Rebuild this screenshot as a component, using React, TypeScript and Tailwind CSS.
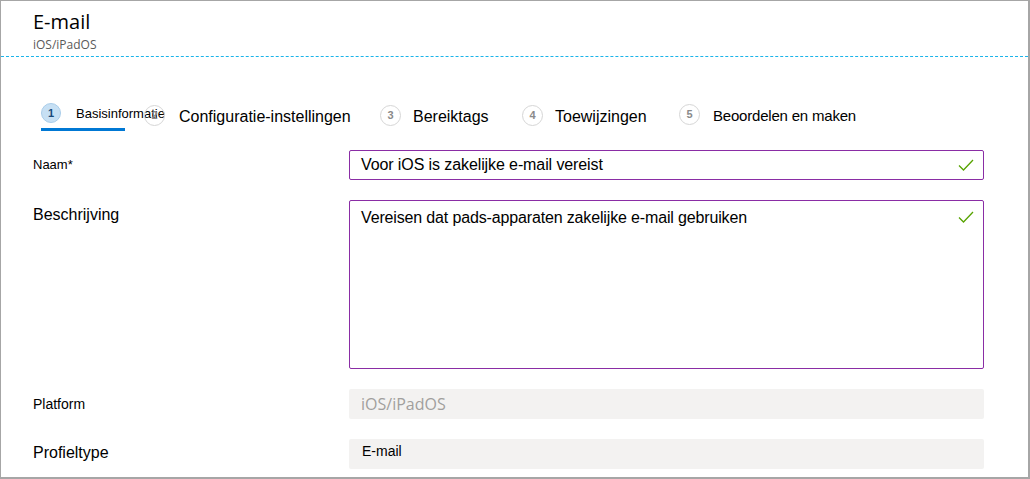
import React from "react";

const arial = { fontFamily: '"Liberation Sans", Arial, sans-serif' };
const segoe = { fontFamily: '"Open Sans", "Noto Sans", sans-serif' };

function Check() {
  return (
    <svg width="16" height="12" viewBox="0 0 16 12" className="shrink-0">
      <path d="M1 6.5 L5.5 11 L15 1" fill="none" stroke="#57a300" strokeWidth="1.3" />
    </svg>
  );
}

function StepCircle({ n, active }: { n: number; active?: boolean }) {
  return active ? (
    <div className="w-[20px] h-[20px] rounded-full bg-[#c7e0f4] border border-[#a9cdea] flex items-center justify-center text-[11px] font-bold text-[#1a4a7a] shrink-0">
      {n}
    </div>
  ) : (
    <div className="w-[21px] h-[21px] rounded-full bg-white border border-[#d6d6d6] flex items-center justify-center text-[11px] font-bold text-[#8a8a8a] shrink-0">
      {n}
    </div>
  );
}

export default function App() {
  return (
    <div
      className="w-[1030px] h-[479px] bg-white border-t border-l border-r-2 border-b-2 border-[#a6a6a6] overflow-hidden relative"
      style={arial}
    >
      {/* Header */}
      <div className="pl-[32px] pt-[9px] h-[55px]">
        <div className="text-[20px] leading-[24px] text-black" style={segoe}>E-mail</div>
        <div className="text-[12px] leading-[16px] text-[#5a5a5a] mt-[3px]" style={segoe}>iOS/iPadOS</div>
      </div>
      <div className="border-t border-dashed border-[#1bb4ea]" />

      {/* Steps */}
      <div className="relative h-[74px]">
        <div className="absolute left-[40px] top-[45px] flex items-center">
          <StepCircle n={1} active />
          <span className="ml-[15px] mt-[2px] text-[13px] text-black">Basisinformatie</span>
        </div>
        <div className="absolute left-[40px] top-[71px] w-[84px] h-[3px] bg-[#0078d4]" />
        <div className="absolute left-[143px] top-[44px] flex items-center">
          <div className="w-[21px] h-[21px] rounded-full border border-[#d6d6d6] flex items-center justify-center text-[11px] font-bold text-[#8a8a8a]">2</div>
          <span className="ml-[14px] mt-[4px] text-[16px] text-black">Configuratie-instellingen</span>
        </div>
        <div className="absolute left-[379px] top-[44px] flex items-center">
          <StepCircle n={3} />
          <span className="ml-[12px] mt-[4px] text-[16px] text-black">Bereiktags</span>
        </div>
        <div className="absolute left-[521px] top-[44px] flex items-center">
          <StepCircle n={4} />
          <span className="ml-[12px] mt-[4px] text-[16px] text-black">Toewijzingen</span>
        </div>
        <div className="absolute left-[678px] top-[44px] flex items-center">
          <StepCircle n={5} />
          <span className="ml-[13px] mt-[4px] text-[15px] tracking-[-0.2px] text-black">Beoordelen en maken</span>
        </div>
      </div>

      {/* Form */}
      <div className="flex flex-col gap-[20px] pl-[32px] pt-[19px]">
        <div className="flex">
          <div className="w-[316px] pt-[5px] text-[13px] text-black">Naam*</div>
          <div className="w-[635px] h-[30px] border border-[#8a2da5] rounded-[2px] flex items-center justify-between pl-[11px] pr-[9px]">
            <span className="text-[16px] tracking-[-0.1px] text-black">Voor iOS is zakelijke e-mail vereist</span>
            <Check />
          </div>
        </div>
        <div className="flex">
          <div className="w-[316px] pt-[3px] text-[16px] text-black">Beschrijving</div>
          <div className="w-[635px] h-[169px] border border-[#8a2da5] rounded-[2px] flex items-start justify-between pl-[11px] pr-[9px] pt-[5px]">
            <span className="text-[16px] tracking-[-0.15px] text-black">Vereisen dat pads-apparaten zakelijke e-mail gebruiken</span>
            <div className="pt-[5px]"><Check /></div>
          </div>
        </div>
        <div className="flex">
          <div className="w-[316px] pt-[5px] text-[14px] text-black">Platform</div>
          <div className="w-[635px] h-[30px] bg-[#f3f2f1] rounded-[2px] flex items-center pl-[12px]">
            <span className="text-[16px] text-[#a19f9d]" style={segoe}>iOS/iPadOS</span>
          </div>
        </div>
        <div className="flex">
          <div className="w-[316px] pt-[2px] text-[16px] text-black">Profieltype</div>
          <div className="w-[635px] h-[30px] bg-[#f3f2f1] rounded-[2px] flex items-start pl-[13px] pt-[2px]">
            <span className="text-[14px] text-black">E-mail</span>
          </div>
        </div>
      </div>
    </div>
  );
}
